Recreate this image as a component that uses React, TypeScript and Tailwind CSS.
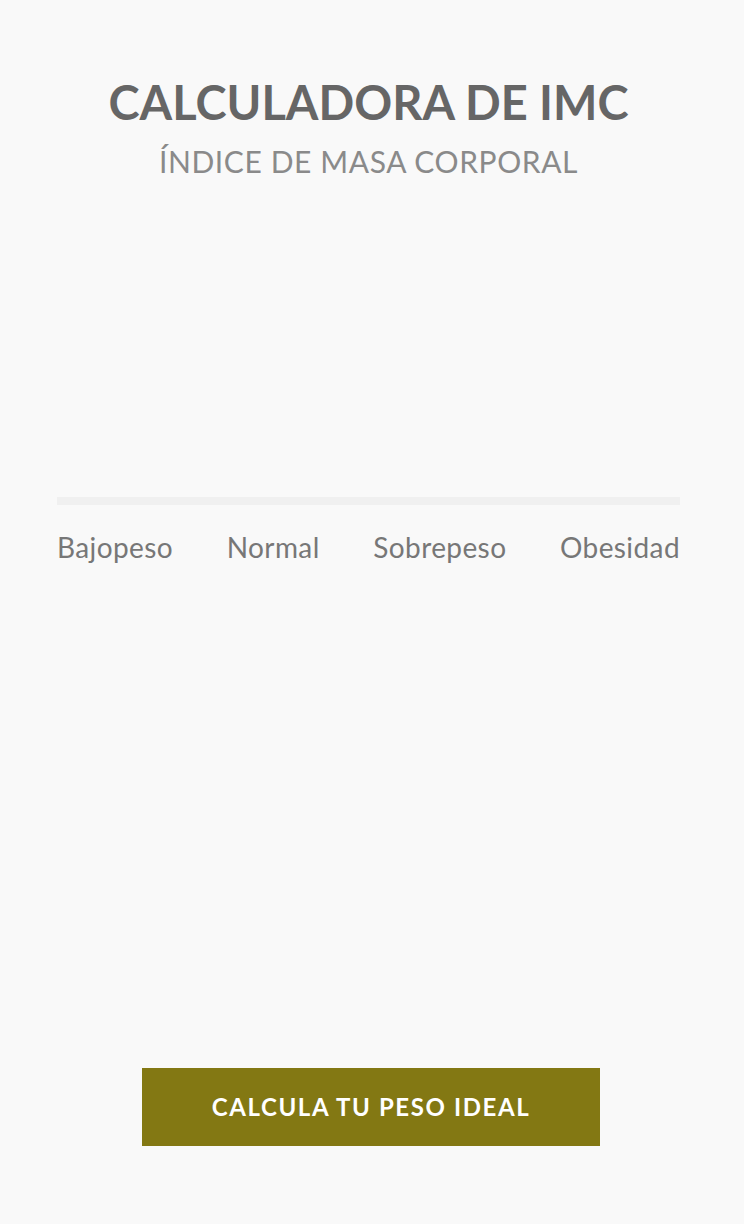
export default function App() {
  return (
    <div className="min-h-[1224px] w-full bg-[#f9f9f9] flex flex-col items-center" style={{ fontFamily: "Lato, 'Noto Sans', sans-serif" }}>
      <div className="flex flex-col items-center mr-[7px]">
        <h1 className="mt-[76px] text-[47px] leading-[52px] font-bold text-[#666666] tracking-[0px]">CALCULADORA DE IMC</h1>
        <p className="mt-[15px] text-[30px] leading-[36px] text-[#8a8a8a] tracking-[0.6px]">ÍNDICE DE MASA CORPORAL</p>
        <div className="mt-[318px] w-[623px] h-[8px] bg-[#f0f0f0]" />
        <div className="mt-[24px] w-[623px] flex justify-between text-[28px] leading-[36px] text-[#777777] tracking-[0.4px]">
          <span>Bajopeso</span>
          <span>Normal</span>
          <span>Sobrepeso</span>
          <span>Obesidad</span>
        </div>
      </div>
      <button className="mt-[503px] mr-[2px] w-[458px] h-[78px] bg-[#837813] text-white text-[24px] font-bold tracking-[1.6px]">CALCULA TU PESO IDEAL</button>
    </div>
  );
}
